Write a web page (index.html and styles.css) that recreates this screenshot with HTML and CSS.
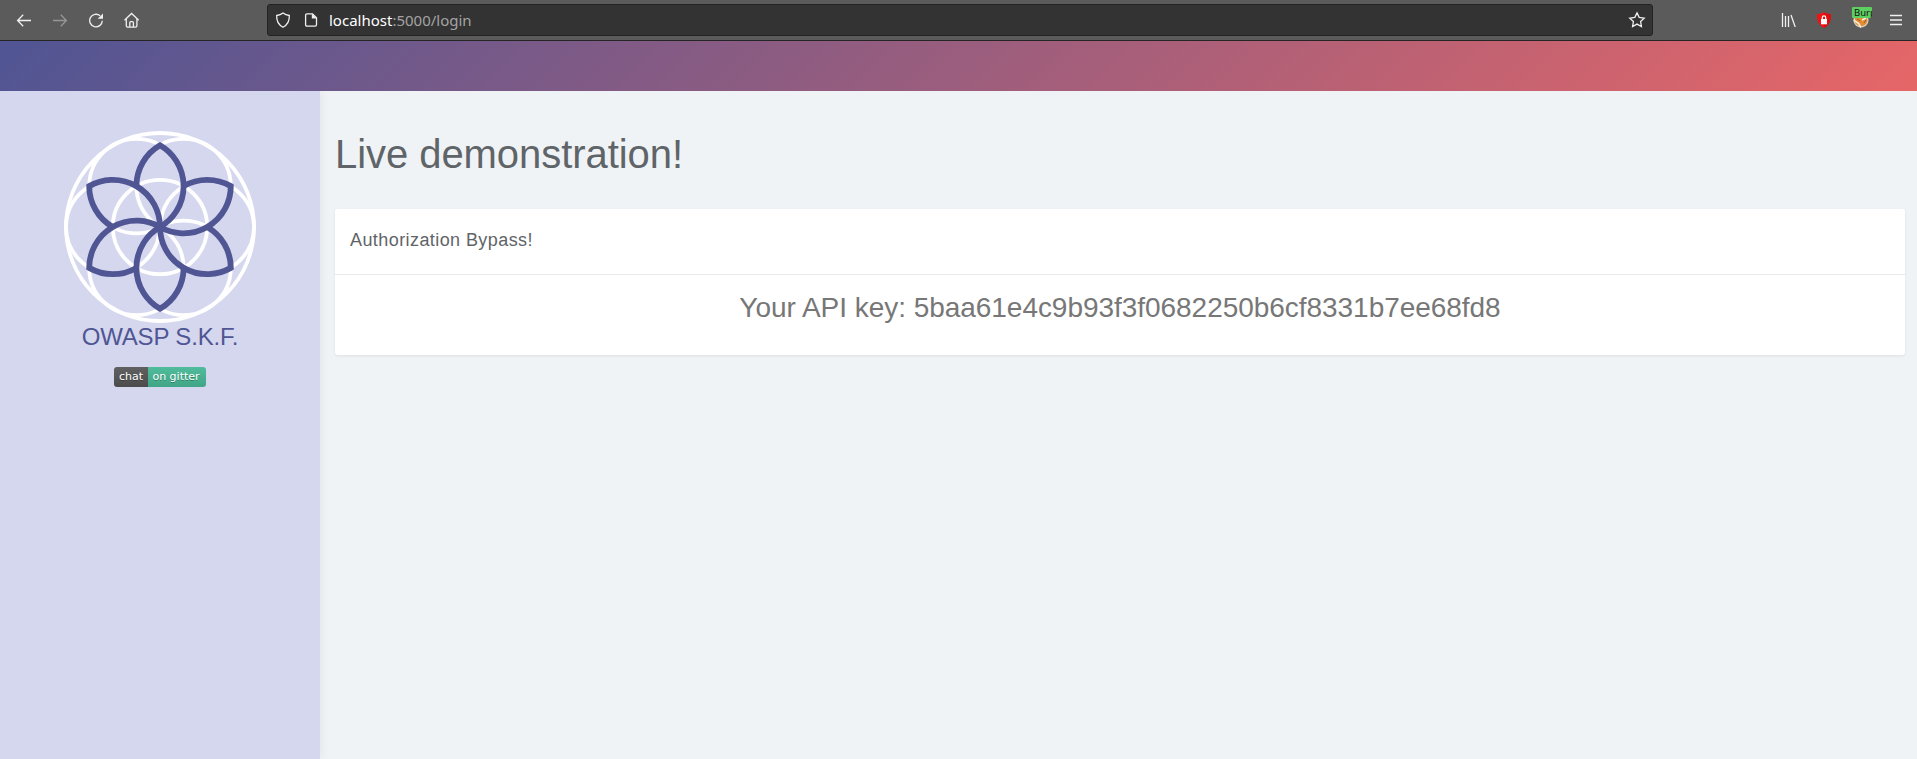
FILE: index.html
```
<!DOCTYPE html>
<html lang="en">
<head>
<meta charset="utf-8">
<title>OWASP S.K.F.</title>
<link rel="stylesheet" href="styles.css">
</head>
<body>
<div class="toolbar">
  <div class="nav">
    <svg class="ico" width="16" height="16" viewBox="0 0 16 16"><path d="M15 8.500H2M7.200 2.800L1.600 8.500l5.600 5.700"/></svg>
    <svg class="ico dim" width="16" height="16" viewBox="0 0 16 16"><path d="M1 8.500h13M8.800 2.800l5.600 5.700L8.800 14.200"/></svg>
    <svg class="ico" width="16" height="16" viewBox="0 0 16 16"><path d="M14.300 8.800a6.300 6.300 0 1 1-2.200-5"/><path class="solid" d="M15 1.500v5.300H9.700z"/></svg>
    <svg class="ico" width="16" height="16" viewBox="0 0 16 16"><path d="M.5 8.300L7.600 1.500l7.100 6.800M2.300 7V13.800q0 1.300 1.300 1.300h8q1.300 0 1.300-1.300V7M5.800 14.800V10.600q0-1 1-1h1.600q1 0 1 1v4.200"/></svg>
  </div>
  <div class="urlbar">
    <svg class="ico" width="16" height="16" viewBox="0 0 16 16"><path d="M8 1c2 1.700 4 2.300 6.300 2.500.3 5-1.200 9-6.300 11.700C2.900 12.500 1.400 8.500 1.700 3.500 4 3.300 6 2.700 8 1z"/></svg>
    <svg class="ico page" width="16" height="16" viewBox="0 0 16 16"><path d="M4 1.800h5.500l4 4v7q0 1.400-1.400 1.400H4q-1.400 0-1.400-1.400V3.200Q2.600 1.800 4 1.800z"/><path class="solid" d="M8.800 1.500l5 5h-5z"/></svg>
    <span class="url"><b>localhost</b>:5000/login</span>
    <svg class="ico star" width="18" height="18" viewBox="0 0 18 18"><path d="M9 1.900l2.200 4.500 5 .7-3.600 3.500.8 4.900L9 13.100l-4.400 2.400.8-4.900L1.800 7.100l5-.7z"/></svg>
  </div>
  <div class="tools">
    <svg class="ico" width="16" height="16" viewBox="0 0 16 16"><path d="M2.500 2v14M5.500 5v11M8.500 5v11M11 4l4.200 12"/></svg>
    <svg width="16" height="18" viewBox="0 0 16 18"><path fill="#f01313" d="M8 1c2 1.500 4.500 2 7 2 .3 6-1.200 11-7 14C2.200 14 .7 9 1 3c2.500 0 5-.5 7-2z"/><path fill="#c80b0b" d="M8 1c2 1.500 4.500 2 7 2 .3 6-1.200 11-7 14z" opacity=".5"/><path fill="#fff" d="M5 8h6v5.300H5z"/><path fill="none" stroke="#fff" stroke-width="1.200" d="M6.300 8V6.500a1.700 1.700 0 0 1 3.400 0V8"/></svg>
    <div class="proxy">
      <svg width="18" height="18" viewBox="0 0 18 18"><circle cx="9" cy="9" r="7.600" fill="#d8cfc0"/><circle cx="9" cy="9.200" r="6.200" fill="#e38e36"/><path d="M1.700 9l5 3.600L9 16.500M10 9l4-2" fill="none" stroke="#f7f0df" stroke-width="1.500"/><path d="M5 8l3 2M12 12l2-3" stroke="#a5581e"/></svg>
      <span class="badge">Burp</span>
    </div>
    <svg class="ico menu" width="14" height="14" viewBox="0 0 14 14"><path d="M1 2.500h12M1 7h12M1 11.500h12"/></svg>
  </div>
</div>
<div class="banner"></div>
<div class="layout">
  <aside class="sidebar">
    <svg class="logo" width="192" height="192" viewBox="-96 -96 192 192">
      <defs>
        <path id="petal" d="M-23.600 -40.900A47.200 47.200 0 0 1 0 -81.750A47.200 47.200 0 0 1 0 0"/>
      </defs>
      <g class="rings">
        <circle r="94"/><circle r="47.200"/>
        <circle cx="47.200" r="46.800"/><circle cx="-47.200" r="46.800"/>
        <circle cx="23.600" cy="-40.900" r="47.200"/><circle cx="-23.600" cy="-40.900" r="47.200"/>
        <circle cx="23.600" cy="40.900" r="47.200"/><circle cx="-23.600" cy="40.900" r="47.200"/>
      </g>
      <g class="petals">
        <use href="#petal"/><use href="#petal" transform="rotate(60)"/><use href="#petal" transform="rotate(120)"/>
        <use href="#petal" transform="rotate(180)"/><use href="#petal" transform="rotate(240)"/><use href="#petal" transform="rotate(300)"/>
      </g>
    </svg>
    <div class="brand">OWASP S.K.F.</div>
    <div class="chat"><span class="chat-l">chat</span><span class="chat-r">on gitter</span></div>
  </aside>
  <main class="main">
    <h1>Live demonstration!</h1>
    <section class="card">
      <div class="card-head">Authorization Bypass!</div>
      <div class="card-body"><span>Your API key: 5baa61e4c9b93f3f0682250b6cf8331b7ee68fd8</span></div>
    </section>
  </main>
</div>
</body>
</html>
```

FILE: styles.css
```
* { box-sizing: border-box; }
body {
  margin: 0;
  height: 759px;
  overflow: hidden;
  display: flex;
  flex-direction: column;
  background: #eff3f6;
  font-family: "Liberation Sans", Arial, sans-serif;
}
svg { display: block; flex: none; }
.toolbar {
  height: 41px;
  flex: none;
  display: flex;
  align-items: flex-start;
  background: #5b5b5b;
  border-bottom: 1px solid #252525;
}
.ico { fill: none; stroke: #f0f0f0; stroke-width: 1.3; }
.ico .solid { fill: #f0f0f0; stroke: none; }
.dim { opacity: .4; }
.nav { width: 267px; padding: 12px 0 0 16px; display: flex; gap: 20px; }
.urlbar {
  width: 1386px;
  height: 32px;
  margin-top: 4px;
  padding: 0 6px 0 7px;
  display: flex;
  align-items: center;
  background: #333;
  border: 1px solid #232323;
  border-radius: 3px;
}
.page { margin-left: 12px; }
.url {
  margin-left: 10px;
  flex: 1;
  font: 15px/30px "Noto Sans", sans-serif;
  color: #a3a3a3;
}
.url b { font-weight: 400; color: #fff; }
.tools { padding: 11px 0 0 127px; display: flex; }
.tools svg:nth-child(2) { margin-left: 20px; }
.proxy { position: relative; margin-left: 20px; }
.badge {
  position: absolute;
  left: 0;
  top: -4px;
  width: 20px;
  height: 11px;
  padding-left: 2px;
  overflow: hidden;
  border-radius: 1px;
  background: #5dce60;
  color: #111;
  font: 9.5px/12px "Noto Sans", sans-serif;
}
.menu { margin: 2px 0 0 19px; }
.banner {
  height: 50px;
  flex: none;
  background: linear-gradient(135deg, #505594, #e66667);
}
.layout { flex: 1; display: flex; }
.sidebar {
  width: 320px;
  flex: none;
  padding-top: 40px;
  display: flex;
  flex-direction: column;
  align-items: center;
  background: #d5d7ee;
  box-shadow: 0 0 10px rgba(0, 0, 0, .07);
  clip-path: inset(0 -20px 0 0);
}
.rings { fill: none; stroke: #fff; stroke-width: 3.8; }
.petals { fill: none; stroke: #505594; stroke-width: 5.8; }
.brand {
  font-size: 24px;
  line-height: 28px;
  letter-spacing: -.17px;
  color: #505594;
  white-space: nowrap;
}
.chat {
  margin-top: 16px;
  width: 92px;
  height: 20px;
  display: flex;
  border-radius: 3px;
  overflow: hidden;
  color: #fff;
  font: 11px/20px "DejaVu Sans", sans-serif;
  text-align: center;
  text-shadow: 0 1px 0 rgba(1, 1, 1, .3);
}
.chat-l { width: 34px; background: linear-gradient(#606060, #4c4c4c); }
.chat-r { flex: 1; padding-right: 2px; background: linear-gradient(#50bc9b, #40a586); }
.main { flex: 1; padding: 39px 12px 0 15px; }
h1 {
  margin: 0 0 31px;
  font-size: 40px;
  line-height: 48px;
  font-weight: 400;
  letter-spacing: -.06px;
  color: #5f6468;
}
.card {
  height: 146px;
  border-radius: 3px;
  background: #fff;
  box-shadow: 0 1px 3px rgba(0, 0, 0, .08);
}
.card-head {
  height: 66px;
  padding: 20px 15px 0;
  border-bottom: 1px solid #e9eaeb;
  font-size: 18px;
  line-height: 23px;
  letter-spacing: .42px;
  color: #5f6468;
}
.card-body {
  padding-top: 15px;
  text-align: center;
  font-size: 28px;
  line-height: 36px;
  letter-spacing: -.04px;
  color: #777;
}
```
